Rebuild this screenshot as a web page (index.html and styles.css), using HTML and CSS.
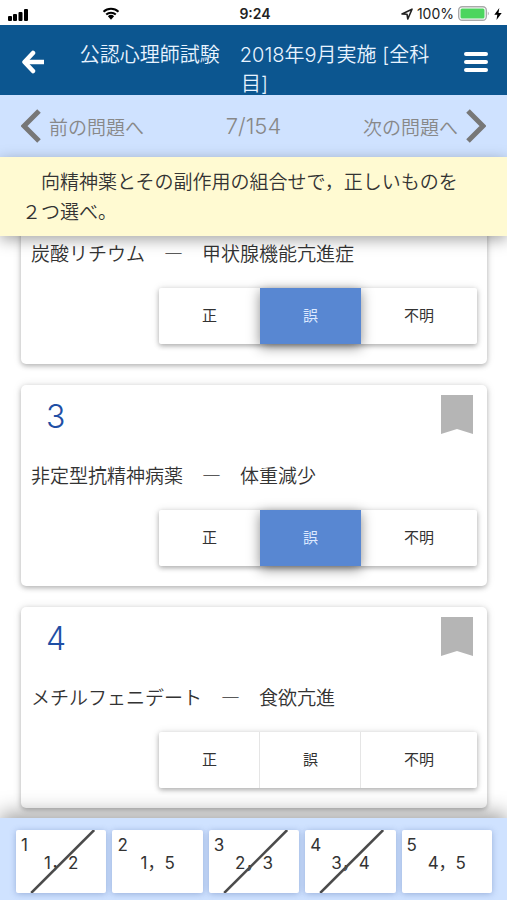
FILE: index.html
```html
<!DOCTYPE html>
<html lang="ja">
<head>
<meta charset="utf-8">
<meta name="viewport" content="width=device-width, initial-scale=1">
<title>公認心理師試験</title>
<link rel="stylesheet" href="styles.css">
</head>
<body>
<div class="status">
  <div class="status-side">
    <svg width="20" height="14" viewBox="0 0 20 14" aria-hidden="true"><rect x="0" y="9" width="4" height="5" rx="1"/><rect x="5" y="7" width="4" height="7" rx="1"/><rect x="10.500" y="5" width="4" height="9" rx="1"/><rect x="16" y="2" width="4" height="12" rx="1"/></svg>
    <svg class="wifi" width="18" height="13" viewBox="0 0 18 13" aria-hidden="true"><path d="M1.500 4.700a11 11 0 0 1 15 0M4.200 7.600a7 7 0 0 1 9.600 0" fill="none" stroke="#000" stroke-width="2"/><path d="M5.900 9.300a4.500 4.500 0 0 1 6.200 0L9 12.800z"/></svg>
  </div>
  <time class="clock">9:24</time>
  <div class="status-side status-right">
    <svg width="12" height="12" viewBox="0 0 12 12" aria-hidden="true"><path d="M1 6 11 1.200 6.800 11 6 6.200z" fill="none" stroke="#222" stroke-width="1.600" stroke-linejoin="round"/></svg>
    <span>100%</span>
    <svg width="32" height="15" viewBox="0 0 32 15" aria-hidden="true"><rect x=".700" y=".700" width="27.600" height="13.600" rx="3.500" fill="#fff" stroke="#aaa" stroke-width="1.400"/><rect x="2.500" y="2.500" width="24" height="10" rx="1.500" fill="#4cd55e"/><path d="M29.800 5.500q2 2 0 4z" fill="#aaa"/></svg>
    <svg width="8" height="12" viewBox="0 0 8 12" aria-hidden="true"><path d="M5.300 0 .300 6.800h3L2.500 12 7.700 5H4.500z"/></svg>
  </div>
</div>

<header class="header">
  <button class="icon-button" type="button" aria-label="戻る">
    <svg width="24" height="24" viewBox="0 0 24 24" aria-hidden="true"><path d="M12 3 3.500 12l8.500 9" fill="none" stroke="#fff" stroke-width="4.500" stroke-linecap="round" stroke-linejoin="round"/><path d="M4 12h19" stroke="#fff" stroke-width="4.500"/></svg>
  </button>
  <h1 class="title">公認心理師試験　2018年9月実施 [全科目]</h1>
  <button class="icon-button" type="button" aria-label="メニュー">
    <svg width="24" height="22" viewBox="0 0 24 22" aria-hidden="true"><path d="M2 3h20M2 11h20M2 19h20" stroke="#fff" stroke-width="4" stroke-linecap="round"/></svg>
  </button>
</header>

<nav class="pager">
  <a class="pager-link" href="#prev"><svg width="20" height="34" viewBox="0 0 20 34" aria-hidden="true"><path d="M18 2 3 17l15 15" fill="none" stroke="#777" stroke-width="5"/></svg>前の問題へ</a>
  <span class="count">7/154</span>
  <a class="pager-link pager-next" href="#next">次の問題へ<svg width="20" height="34" viewBox="0 0 20 34" aria-hidden="true"><path d="m2 2 15 15L2 32" fill="none" stroke="#777" stroke-width="5"/></svg></a>
</nav>

<p class="question">　向精神薬とその副作用の組合せで，正しいものを２つ選べ。</p>

<main class="list">
  <section class="card">
    <div class="card-head"><button class="mark" type="button" aria-label="しおり"><svg width="32" height="40" viewBox="0 0 32 40" aria-hidden="true"><path d="M0 0h32v39l-16-5-16 5z" fill="#b5b5b5"/></svg></button></div>
    <p class="choice">炭酸リチウム　—　甲状腺機能亢進症</p>
    <div class="segments"><button class="segment" type="button">正</button><button class="segment selected" type="button" aria-pressed="true">誤</button><button class="segment" type="button">不明</button></div>
  </section>
  <section class="card">
    <div class="card-head"><h2 class="number">3</h2><button class="mark" type="button" aria-label="しおり"><svg width="32" height="40" viewBox="0 0 32 40" aria-hidden="true"><path d="M0 0h32v39l-16-5-16 5z" fill="#b5b5b5"/></svg></button></div>
    <p class="choice">非定型抗精神病薬　—　体重減少</p>
    <div class="segments"><button class="segment" type="button">正</button><button class="segment selected" type="button" aria-pressed="true">誤</button><button class="segment" type="button">不明</button></div>
  </section>
  <section class="card">
    <div class="card-head"><h2 class="number">4</h2><button class="mark" type="button" aria-label="しおり"><svg width="32" height="40" viewBox="0 0 32 40" aria-hidden="true"><path d="M0 0h32v39l-16-5-16 5z" fill="#b5b5b5"/></svg></button></div>
    <p class="choice">メチルフェニデート　—　食欲亢進</p>
    <div class="segments"><button class="segment" type="button">正</button><button class="segment" type="button">誤</button><button class="segment" type="button">不明</button></div>
  </section>
</main>

<footer class="answers">
  <button class="answer" type="button"><span class="answer-no">1</span>1，2<svg class="slash" viewBox="0 0 90 63" aria-hidden="true"><path d="M15 63 78 0"/></svg></button>
  <button class="answer" type="button"><span class="answer-no">2</span>1，5</button>
  <button class="answer" type="button"><span class="answer-no">3</span>2，3<svg class="slash" viewBox="0 0 90 63" aria-hidden="true"><path d="M15 63 78 0"/></svg></button>
  <button class="answer" type="button"><span class="answer-no">4</span>3，4<svg class="slash" viewBox="0 0 90 63" aria-hidden="true"><path d="M15 63 78 0"/></svg></button>
  <button class="answer" type="button"><span class="answer-no">5</span>4，5</button>
</footer>
</body>
</html>
```
FILE: styles.css
```css
* { box-sizing: border-box; margin: 0; }

body {
  display: flex;
  flex-direction: column;
  height: 100vh;
  overflow: hidden;
  background: #fff;
  color: #333;
  font-family: "Noto Sans CJK JP", sans-serif;
  font-size: 19px;
  font-weight: 350;
}

button {
  padding: 0;
  border: 0;
  background: none;
  color: inherit;
  font: inherit;
}

svg { display: block; flex: none; }

.status {
  display: flex;
  align-items: center;
  height: 25px;
  padding: 2px 5px 0 8px;
  color: #222;
  font: 14px/20px Inter, sans-serif;
}
.status-side { display: flex; flex: 1; align-items: center; gap: 4px; }
.status-right { justify-content: flex-end; }
.wifi { margin-left: 70px; }
.clock { font-weight: 600; }

.header {
  display: flex;
  align-items: flex-start;
  gap: 24px;
  height: 70px;
  padding: 16px 18px 0 20px;
  background: #0c5690;
  color: #e8f3ff;
}
.icon-button {
  display: grid;
  place-items: center;
  width: 26px;
  height: 41px;
}
.title,
.count,
.number,
.answer {
  font-family: Inter, "Noto Sans CJK JP", sans-serif;
}
.title {
  flex: 1;
  font-size: 20px;
  font-weight: 350;
  line-height: 29px;
  text-align: center;
}

.pager {
  display: grid;
  grid-template-columns: 1fr auto 1fr;
  align-items: center;
  height: 62px;
  padding: 0 21px;
  background: #cfe2ff;
  color: #888;
}
.pager-link {
  display: flex;
  align-items: center;
  gap: 8px;
  color: inherit;
  text-decoration: none;
}
.pager-next { justify-content: flex-end; }
.count { font-size: 22px; }

.question {
  z-index: 1;
  height: 79px;
  padding: 9px 40px 9px 22px;
  background: #fffad2;
  box-shadow: 0 4px 14px rgba(0, 0, 0, .35);
  line-height: 30px;
}

.list {
  display: flex;
  flex: 1;
  flex-direction: column;
  justify-content: flex-end;
  gap: 21px;
  min-height: 0;
  padding: 0 20px 10px 21px;
  overflow: hidden;
}
.card {
  flex: none;
  padding: 10px 10px 20px;
  border-radius: 5px;
  background: #fff;
  box-shadow: 0 2px 5px rgba(0, 0, 0, .25), 0 0 10px rgba(0, 0, 0, .1);
}
.card-head {
  display: flex;
  height: 65px;
  padding: 0 4px 0 15px;
}
.number {
  color: #1f4fa5;
  font-size: 32px;
  font-weight: 300;
  line-height: 44px;
}
.mark { height: 40px; margin-left: auto; }
.choice { height: 50px; line-height: 30px; }

.segments {
  display: flex;
  width: fit-content;
  margin-left: auto;
  border-radius: 2px;
  box-shadow: 0 2px 5px rgba(0, 0, 0, .28), 0 0 8px rgba(0, 0, 0, .1);
}
.segment {
  height: 56px;
  padding: 0 43px 4px;
  font-size: 15px;
  font-weight: 400;
}
.segment + .segment { box-shadow: -1px 0 #e5e5e5; }
.segment + .selected {
  background: #5887d2;
  box-shadow: 0 3px 12px rgba(0, 0, 0, .45);
  color: #dce9ff;
}
.segment.selected + .segment { box-shadow: none; }

.answers {
  z-index: 1;
  display: grid;
  grid-template-columns: repeat(5, 1fr);
  gap: 6px;
  height: 82px;
  padding: 12px 15px 7px 16px;
  background: #cfe2ff;
  box-shadow: 0 -4px 20px rgba(0, 0, 0, .4);
}
.answer {
  position: relative;
  border-radius: 2px;
  background: #fff;
  box-shadow: 0 1px 6px rgba(50, 80, 150, .35);
  font-size: 17px;
  font-weight: 400;
}
.answer-no {
  position: absolute;
  top: 4px;
  left: 5px;
  line-height: 22px;
}
.slash {
  position: absolute;
  inset: 0;
  width: 100%;
  height: 100%;
  fill: none;
  stroke: #4b4b4b;
  stroke-width: 2.5;
}
```
